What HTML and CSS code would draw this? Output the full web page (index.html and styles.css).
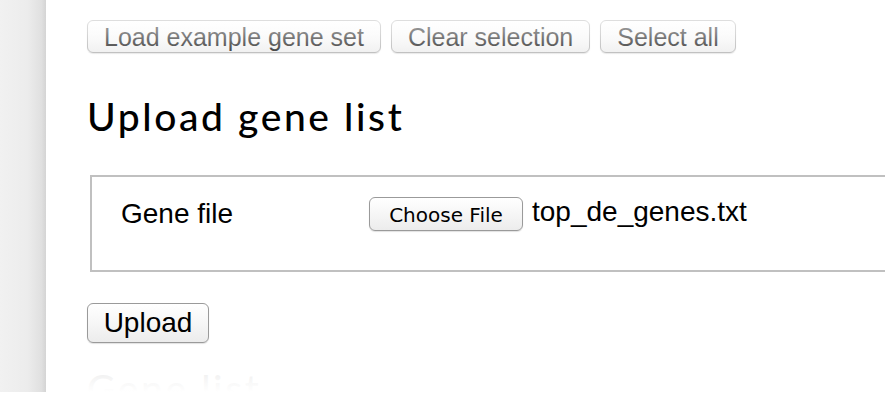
FILE: index.html
```html
<!DOCTYPE html>
<html>
<head>
<meta charset="utf-8">
<link rel="stylesheet" href="styles.css">
</head>
<body>
<div class="stage">
  <div class="shadow"></div>
  <div class="window">
    <div class="toolbar">
      <button class="btn">Load example gene set</button>
      <button class="btn">Clear selection</button>
      <button class="btn">Select all</button>
    </div>
    <h2 class="title">Upload gene list</h2>
    <div class="fieldset">
      <span class="label">Gene file</span>
      <span class="file">
        <button class="btn choose">Choose File</button>
        <span class="filename">top_de_genes.txt</span>
      </span>
    </div>
    <button class="btn upload">Upload</button>
    <h2 class="title next">Gene list</h2>
  </div>
  <div class="fade-top"></div>
  <div class="fade-bottom"></div>
</div>
</body>
</html>
```
FILE: styles.css
```css
html, body {
  margin: 0;
  padding: 0;
  background: #fff;
}
.stage {
  position: relative;
  display: flex;
  height: 392px;
  overflow: hidden;
}
.shadow {
  width: 46px;
  flex: none;
  background: linear-gradient(to right, #f1f1f1 0%, #ececec 60%, #e0e0e0 90%, #d4d4d4 100%);
}
.window {
  flex: 1;
  min-width: 0;
  padding: 20px 0 0 41px;
  font-family: "Liberation Sans", Arial, sans-serif;
  color: #000;
}
.toolbar {
  display: flex;
  gap: 10px;
}
.btn {
  box-sizing: border-box;
  font-family: "Liberation Sans", Arial, sans-serif;
  font-size: 25px;
  line-height: 28px;
  color: #000;
  padding: 1px 16px 1px;
  height: 33px;
  border: 1px solid #a9a9a9;
  border-radius: 6px;
  background: linear-gradient(to bottom, #ffffff 0%, #f6f6f6 50%, #ececec 100%);
  box-shadow: 0 1px 1px rgba(0,0,0,0.12);
  margin: 0;
}
.title {
  font-family: Lato, "Open Sans", sans-serif;
  font-weight: 500;
  font-size: 39px;
  letter-spacing: 2.6px;
  line-height: 48px;
  margin: 39px 0 0 0;
}
.fieldset {
  box-sizing: border-box;
  display: flex;
  align-items: center;
  height: 97px;
  margin: 35px -20px 0 3px;
  border: 2px solid #c0c0c0;
  padding: 0 0 20px 29px;
}
.label {
  font-size: 28px;
  width: 248px;
  flex: none;
}
.file {
  display: flex;
  align-items: center;
}
.choose {
  font-family: "DejaVu Sans", sans-serif;
  font-size: 20px;
  height: 34px;
  width: 154px;
  padding: 3px 0 0 0;
  line-height: 26px;
  border-color: #9a9a9a;
}
.filename {
  font-size: 28px;
  margin-left: 9px;
  margin-top: -4px;
}
.upload {
  display: block;
  font-size: 28px;
  height: 40px;
  width: 122px;
  padding: 0;
  line-height: 36px;
  margin-top: 31px;
  border-color: #9a9a9a;
}
.title.next {
  margin-top: 21px;
}
.fade-top {
  position: absolute;
  left: 46px;
  right: 0;
  top: 0;
  height: 90px;
  background: linear-gradient(to bottom, rgba(255,255,255,0.75) 0%, rgba(255,255,255,0.55) 35%, rgba(255,255,255,0.3) 55%, rgba(255,255,255,0) 100%);
}
.fade-bottom {
  position: absolute;
  left: 46px;
  right: 0;
  bottom: 0;
  height: 46px;
  background: linear-gradient(to bottom, rgba(255,255,255,0) 0%, rgba(255,255,255,0.9) 35%, rgba(255,255,255,0.96) 70%, #fff 100%);
}
```
